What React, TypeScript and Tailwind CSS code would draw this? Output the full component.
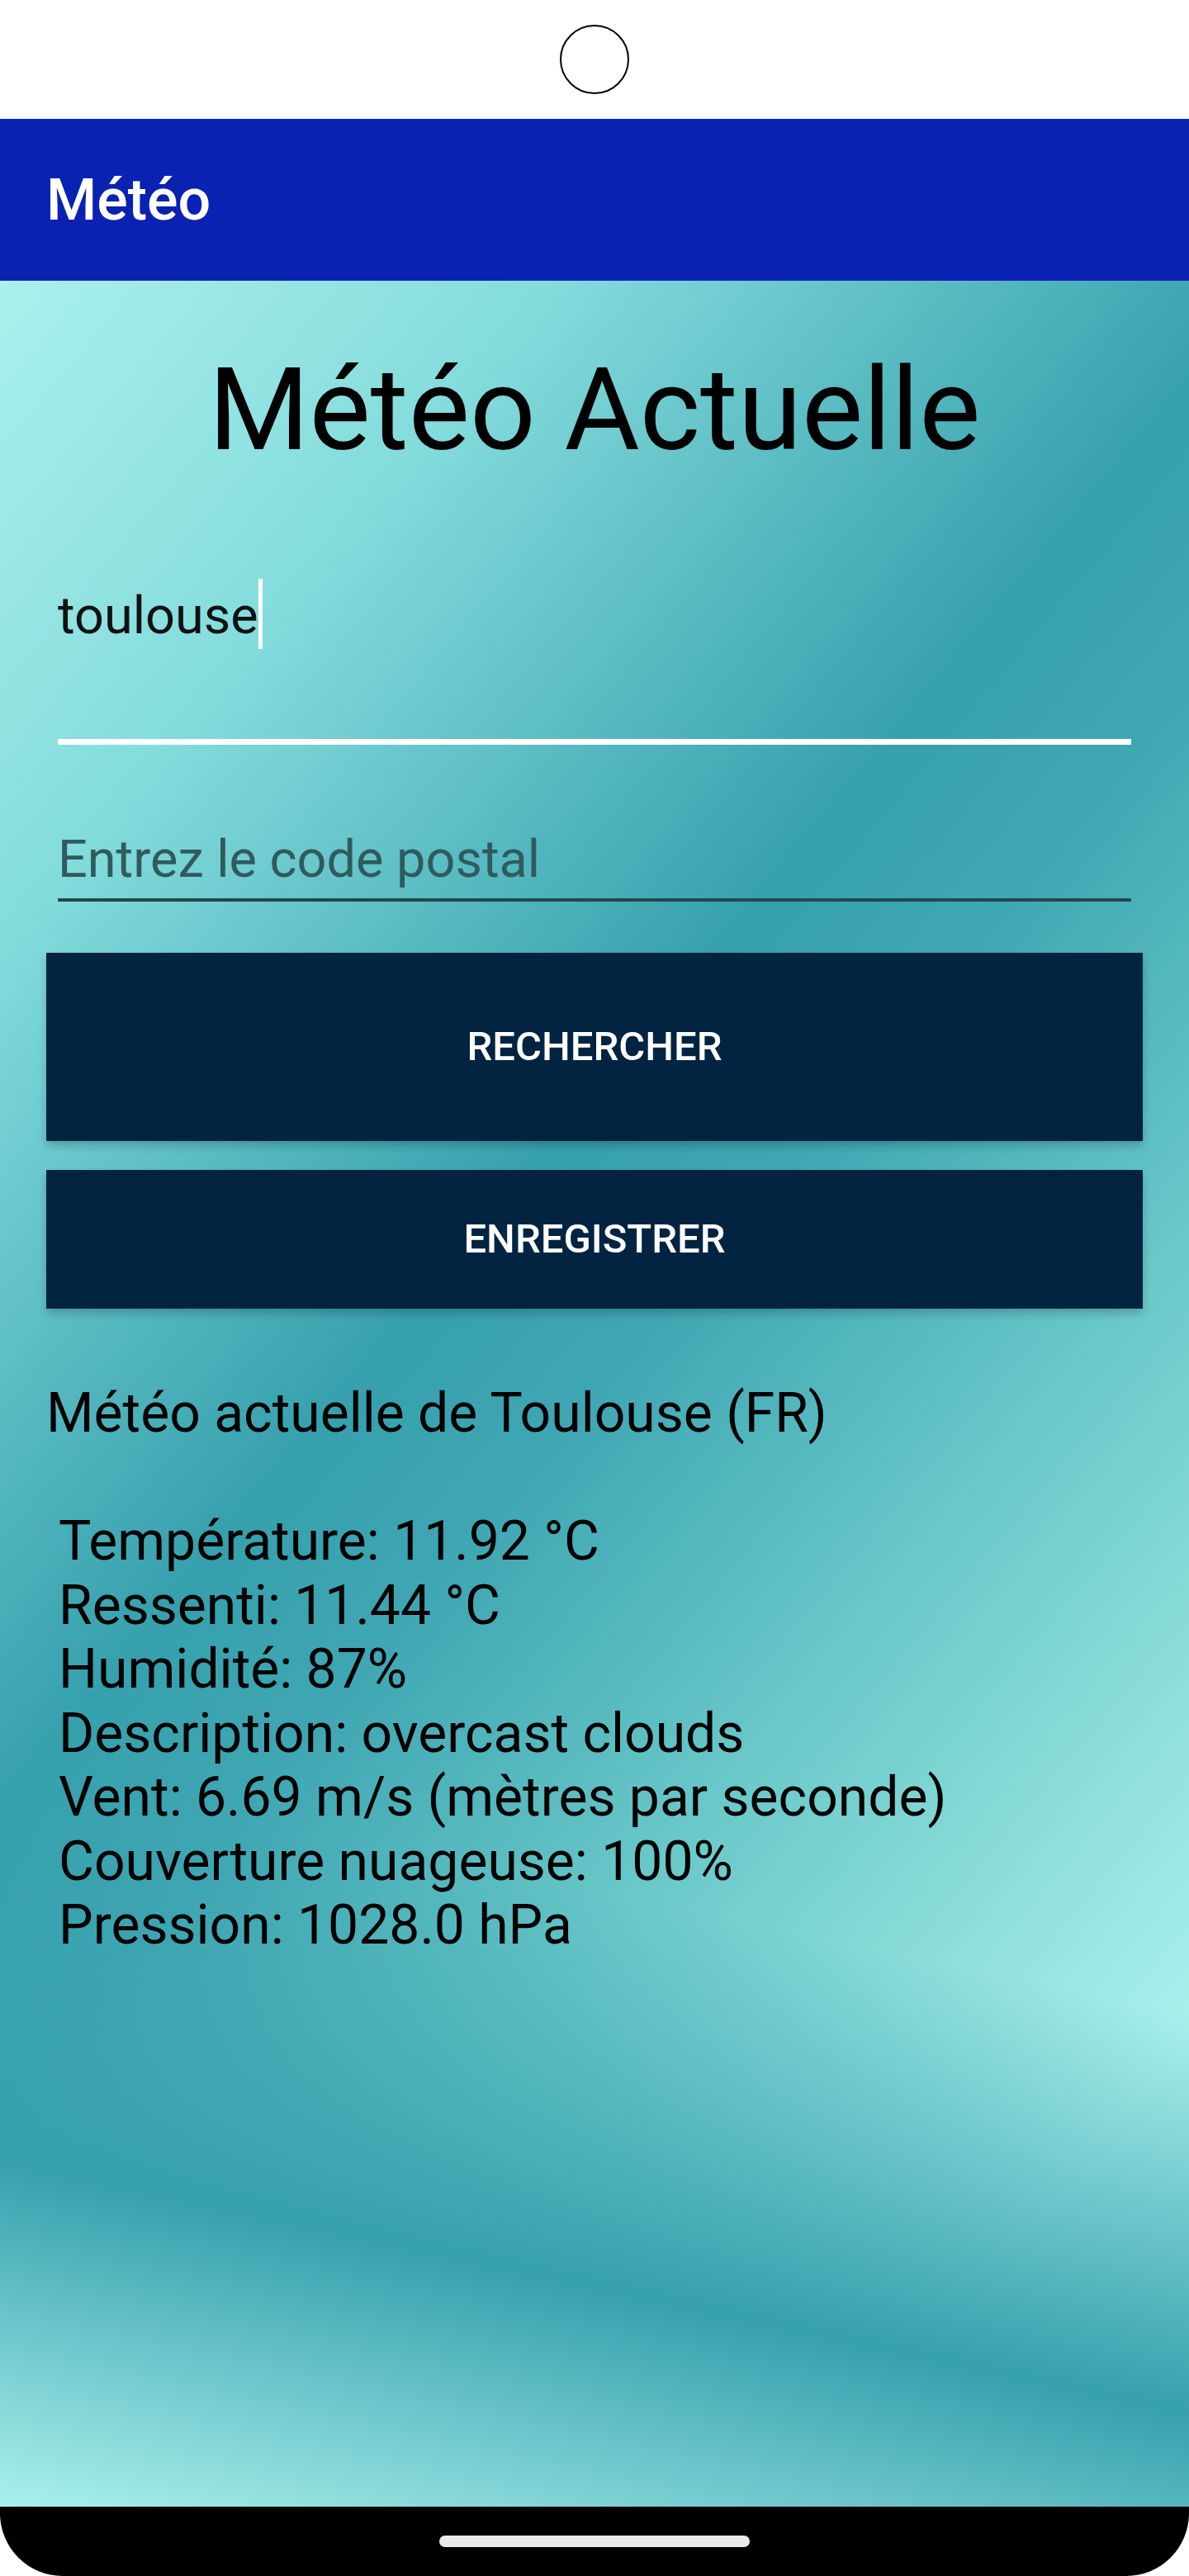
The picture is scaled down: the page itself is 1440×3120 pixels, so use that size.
export default function App() {
  const details = [
    "Température: 11.92 °C",
    "Ressenti: 11.44 °C",
    "Humidité: 87%",
    "Description: overcast clouds",
    "Vent: 6.69 m/s (mètres par seconde)",
    "Couverture nuageuse: 100%",
    "Pression: 1028.0 hPa",
  ];

  return (
    <div className="w-[1440px] h-[3120px] flex flex-col bg-white font-[Roboto,sans-serif]">
      {/* status bar with camera hole */}
      <div className="h-[144px] shrink-0 flex items-center justify-center">
        <div className="w-[84px] h-[84px] rounded-full border-2 border-black" />
      </div>

      {/* app bar */}
      <header className="h-[196px] shrink-0 bg-[#0a22b2] flex items-center px-[56px]">
        <h1 className="text-white text-[70px] font-medium leading-none">Météo</h1>
      </header>

      <main className="flex-1 flex flex-col px-[56px] bg-[image:linear-gradient(192deg,transparent_70%,#36a0ad_86%,#aaf0ec_100%),linear-gradient(130deg,#aaf0ec_0%,#84dcdc_18%,#36a0ad_42%,#3fa7b3_50%,#6ccaca_66%,#aaf0ec_87%)]">
        <h2 className="mt-[74px] text-center text-[140px] leading-[164px] text-black">
          Météo Actuelle
        </h2>

        {/* city input */}
        <div className="mx-[14px] mt-[131px]">
          <div className="flex items-center h-[74px] text-[63px] leading-[74px] text-[#111]">
            <span>toulouse</span>
            <div className="w-[5px] h-[85px] bg-white -mt-[6px]" />
          </div>
          <div className="mt-[112px] h-[7px] bg-white" />
        </div>

        {/* postal code input */}
        <div className="mx-[14px] mt-[102px]">
          <div className="h-[74px] text-[63px] leading-[74px] text-[#2f5b5d]">
            Entrez le code postal
          </div>
          <div className="mt-[10px] h-[4px] bg-[#20494c]" />
        </div>

        <button className="mt-[62px] h-[228px] bg-[#022441] text-white text-[49px] font-medium shadow-[0_6px_10px_rgba(0,0,0,0.2)]">
          RECHERCHER
        </button>
        <button className="mt-[35px] h-[168px] bg-[#022441] text-white text-[49px] font-medium shadow-[0_6px_10px_rgba(0,0,0,0.2)]">
          ENREGISTRER
        </button>

        {/* weather result */}
        <div className="mt-[88px] text-[66px] leading-[77.5px] text-black">
          <p>Météo actuelle de Toulouse (FR)</p>
          <div className="mt-[77.5px] pl-[15px]">
            {details.map((line) => (
              <p key={line}>{line}</p>
            ))}
          </div>
        </div>
      </main>

      {/* nav bar */}
      <div className="h-[84px] shrink-0 bg-black rounded-b-[76px] flex justify-center pt-[35px]">
        <div className="w-[376px] h-[14px] rounded-full bg-[#ebebeb]" />
      </div>
    </div>
  );
}
